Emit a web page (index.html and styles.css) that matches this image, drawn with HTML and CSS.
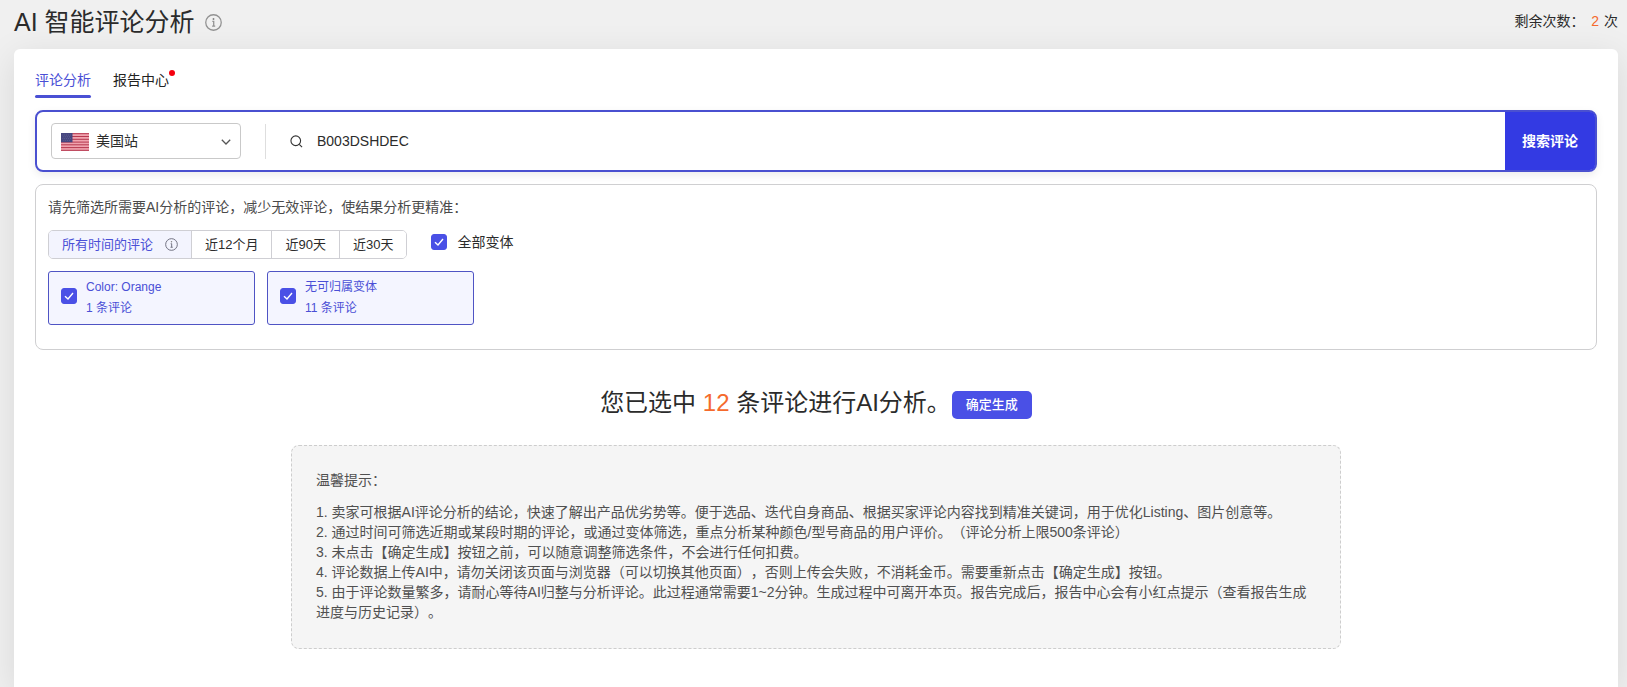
FILE: index.html
```html
<!DOCTYPE html>
<html lang="zh-CN">
<head>
<meta charset="utf-8">
<meta name="viewport" content="width=device-width, initial-scale=1">
<title>AI 智能评论分析</title>
<link rel="stylesheet" href="styles.css">
</head>
<body>
<header class="page-header">
  <h1 class="page-title">AI 智能评论分析</h1>
  <svg class="info info-large" viewBox="0 0 16 16" aria-hidden="true"><circle cx="8" cy="8" r="7.3"/><path d="M6.9 7H8.2V11.3M6.7 11.4H9.6"/><circle class="info-dot" cx="8" cy="4.7" r=".9"/></svg>
  <p class="quota">剩余次数： <span class="quota-count">2</span> 次</p>
</header>

<main class="panel">
  <nav class="tabs">
    <a class="tab tab-active" href="#analysis">评论分析</a>
    <a class="tab" href="#reports">报告中心<span class="tab-dot"></span></a>
  </nav>

  <form class="search">
    <div class="site">
      <svg class="flag" viewBox="0 0 28 18" aria-hidden="true">
        <rect width="28" height="18" fill="#f0a3ae"/>
        <path d="M0 .7H28M0 3.5H28M0 6.3H28M0 9.1H28M0 11.8H28M0 14.6H28M0 17.3H28" stroke="#b5384f" stroke-width="1"/>
        <rect width="11.5" height="9.3" fill="#46467f"/>
        <path d="M1.5 2H11M2.5 3.8H10M1.5 5.6H11M2.5 7.4H10" stroke="#7a7aa8" stroke-width=".6" stroke-dasharray=".7 1.2"/>
      </svg>
      <select class="site-select" aria-label="站点"><option>美国站</option></select>
      <svg class="chevron" viewBox="0 0 10 6" aria-hidden="true"><path d="M.8 .8L5 5L9.2 .8"/></svg>
    </div>
    <label class="query">
      <svg class="magnifier" viewBox="0 0 14 14" aria-label="搜索"><circle cx="6.2" cy="6.2" r="5.2"/><path d="M10 10L13 13"/></svg>
      <input class="query-input" type="text" value="B003DSHDEC">
    </label>
    <button class="search-button" type="button">搜索评论</button>
  </form>

  <section class="filters">
    <p class="filters-title">请先筛选所需要AI分析的评论，减少无效评论，使结果分析更精准：</p>
    <div class="filter-row">
      <div class="periods">
        <button class="period period-active" type="button">所有时间的评论<svg class="info" viewBox="0 0 16 16" aria-hidden="true"><circle cx="8" cy="8" r="7.2"/><path d="M7 7H8.2V11.3M6.8 11.4H9.5"/><circle class="info-dot" cx="8" cy="4.7" r=".9"/></svg></button>
        <button class="period" type="button">近12个月</button>
        <button class="period" type="button">近90天</button>
        <button class="period" type="button">近30天</button>
      </div>
      <label class="all-variants"><span class="box"><input class="check" type="checkbox" checked><svg class="tick" viewBox="0 0 16 16" aria-hidden="true"><path d="M4 8.2L7 11L12 5"/></svg></span>全部变体</label>
    </div>
    <div class="variants">
      <label class="variant"><span class="box"><input class="check" type="checkbox" checked><svg class="tick" viewBox="0 0 16 16" aria-hidden="true"><path d="M4 8.2L7 11L12 5"/></svg></span><span>Color: Orange<br>1 条评论</span></label>
      <label class="variant"><span class="box"><input class="check" type="checkbox" checked><svg class="tick" viewBox="0 0 16 16" aria-hidden="true"><path d="M4 8.2L7 11L12 5"/></svg></span><span>无可归属变体<br>11 条评论</span></label>
    </div>
  </section>

  <div class="summary">
    <p class="summary-text">您已选中 <span class="summary-count">12</span> 条评论进行AI分析。</p>
    <button class="generate" type="button">确定生成</button>
  </div>

  <section class="tips">
    <p class="tips-title">温馨提示：</p>
    <p>1. 卖家可根据AI评论分析的结论，快速了解出产品优劣势等。便于选品、迭代自身商品、根据买家评论内容找到精准关键词，用于优化Listing、图片创意等。</p>
    <p>2. 通过时间可筛选近期或某段时期的评论，或通过变体筛选，重点分析某种颜色/型号商品的用户评价。（评论分析上限500条评论）</p>
    <p>3. 未点击【确定生成】按钮之前，可以随意调整筛选条件，不会进行任何扣费。</p>
    <p>4. 评论数据上传AI中，请勿关闭该页面与浏览器（可以切换其他页面），否则上传会失败，不消耗金币。需要重新点击【确定生成】按钮。</p>
    <p>5. 由于评论数量繁多，请耐心等待AI归整与分析评论。此过程通常需要1~2分钟。生成过程中可离开本页。报告完成后，报告中心会有小红点提示（查看报告生成进度与历史记录）。</p>
  </section>
</main>
</body>
</html>
```

FILE: styles.css
```css
* {
  box-sizing: border-box;
}

body {
  margin: 0;
  min-height: 100vh;
  display: flex;
  flex-direction: column;
  overflow-x: hidden;
  background: #f0f0f0;
  color: #2b2b2b;
  font: 14px/20px "Liberation Sans", "Noto Sans CJK SC", sans-serif;
  text-spacing-trim: space-all;
}

h1,
p {
  margin: 0;
}

button,
input,
select {
  font: inherit;
  color: inherit;
}

button {
  cursor: pointer;
}

.page-header {
  display: flex;
  align-items: center;
  gap: 10px;
  padding: 4px 9px 9px 14px;
}

.page-title {
  font-size: 25px;
  line-height: 36px;
  font-weight: 400;
}

.quota {
  margin-left: auto;
  padding-bottom: 3px;
}

.quota-count {
  margin: 0 1px 0 3px;
  color: #f56a2c;
}

.info {
  width: 13px;
  height: 13px;
  fill: none;
  stroke: #6f7080;
  stroke-width: 1.2;
}

.info-large {
  width: 17px;
  height: 17px;
  stroke: #929292;
}

.info-dot {
  fill: #808080;
  stroke: none;
}

.panel {
  flex: 1;
  margin: 0 9px 0 14px;
  padding: 21px 21px 38px;
  border-radius: 6px 6px 0 0;
  background: #fff;
  box-shadow: 0 8px 36px rgba(0, 0, 0, 0.1);
}

.tabs {
  display: flex;
  gap: 22px;
}

.tab {
  position: relative;
  padding-bottom: 5px;
  border-bottom: 3px solid transparent;
  color: #222;
  text-decoration: none;
}

.tab-active {
  color: #4a4fd6;
}

.tab-active::after {
  content: "";
  position: absolute;
  inset: auto 0 -3px;
  height: 3px;
  border-radius: 2px;
  background: #4a50d4;
}

.tab-dot {
  position: absolute;
  top: 0;
  right: -6px;
  width: 6px;
  height: 6px;
  border-radius: 50%;
  background: #f5000e;
}

.search {
  display: flex;
  align-items: center;
  height: 62px;
  margin-top: 12px;
  padding-left: 14px;
  border: 2px solid #4a50d0;
  border-radius: 8px;
  box-shadow: 0 3px 8px rgba(0, 0, 0, 0.08);
}

.site {
  position: relative;
  width: 190px;
}

.site-select {
  display: block;
  width: 100%;
  height: 36px;
  padding: 0 30px 0 44px;
  border: 1px solid #c9c9c9;
  border-radius: 4px;
  background: #fff;
  appearance: none;
}

.flag {
  position: absolute;
  top: 10px;
  left: 10px;
  width: 28px;
  height: 18px;
}

.chevron {
  position: absolute;
  top: 16px;
  right: 10px;
  width: 10px;
  height: 6px;
  fill: none;
  stroke: #555;
  stroke-width: 1.3;
}

.query {
  flex: 1;
  display: flex;
  align-items: center;
  gap: 14px;
  height: 35px;
  margin-left: 24px;
  padding-left: 24px;
  border-left: 1px solid #dedede;
}

.magnifier {
  width: 13px;
  height: 13px;
  fill: none;
  stroke: #333;
  stroke-width: 1.2;
}

.query-input {
  flex: 1;
  min-width: 0;
  padding: 0;
  border: 0;
  outline: 0;
  background: none;
}

.search-button {
  align-self: stretch;
  width: 90px;
  padding: 0;
  border: 0;
  border-radius: 0 5px 5px 0;
  background: #333ae3;
  color: #fff;
  font-weight: 700;
}

.filters {
  margin-top: 12px;
  padding: 12px 12px 24px;
  border: 1px solid #cfcfd1;
  border-radius: 8px;
}

.filters-title {
  color: #4a4a4a;
}

.filter-row {
  display: flex;
  gap: 24px;
  margin-top: 13px;
}

.periods {
  display: flex;
  height: 29px;
  border: 1px solid #cfcfd4;
  border-radius: 5px;
  overflow: hidden;
}

.period {
  display: flex;
  align-items: center;
  gap: 12px;
  padding: 0 13px;
  border: 0;
  border-left: 1px solid #cfcfd4;
  background: #fff;
  font-size: 13px;
  line-height: 20px;
}

.period-active {
  border-left: 0;
  background: #f3f4fe;
  color: #4a4fd6;
}

.all-variants {
  display: flex;
  align-items: center;
  gap: 10px;
  height: 24px;
}

.box {
  position: relative;
  flex: none;
  width: 16px;
  height: 16px;
}

.check {
  display: block;
  width: 16px;
  height: 16px;
  margin: 0;
  border: 1px solid #4a50e6;
  border-radius: 3px;
  background: #fff;
  appearance: none;
}

.check:checked {
  background: #4a50e6;
}

.tick {
  position: absolute;
  inset: 0;
  fill: none;
  stroke: #fff;
  stroke-width: 1.4;
  pointer-events: none;
}

.variants {
  display: flex;
  gap: 12px;
  margin-top: 12px;
}

.variant {
  display: flex;
  align-items: center;
  gap: 9px;
  width: 207px;
  padding: 5px 12px;
  border: 1px solid #4f54c4;
  border-radius: 3px;
  background: #f4f5ff;
  color: #4a4fd6;
  font-size: 12px;
  line-height: 21px;
}

.variant .box {
  margin-bottom: 4px;
}

.summary {
  display: flex;
  justify-content: center;
  align-items: center;
  gap: 1px;
  margin-top: 35px;
}

.summary-text {
  font-size: 24px;
  line-height: 36px;
}

.summary-count {
  color: #f56a2c;
}

.generate {
  height: 28px;
  margin-top: 4px;
  padding: 0 14px;
  border: 0;
  border-radius: 5px;
  background: #4a50e6;
  color: #fff;
  font-size: 13px;
  font-weight: 500;
}

.tips {
  max-width: 1050px;
  margin: 24px auto 0;
  padding: 24px 24px 26px;
  border: 1px dashed #cdcdcd;
  border-radius: 8px;
  background: #f5f5f5;
  color: #505050;
}

.tips-title {
  margin-bottom: 12px;
}
```
